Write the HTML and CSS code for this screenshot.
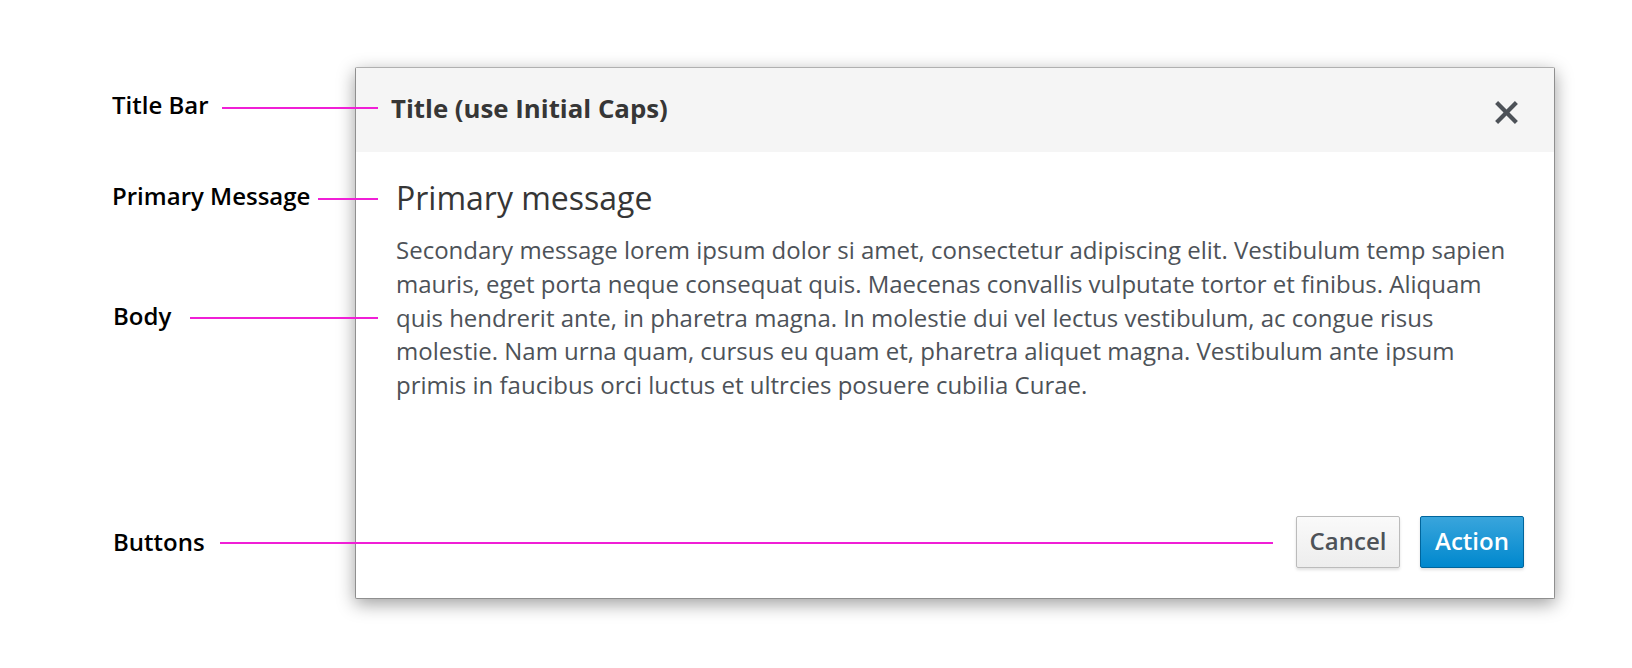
FILE: index.html
```html
<!DOCTYPE html>
<html lang="en">
<head>
<meta charset="utf-8">
<title>Modal Dialog Anatomy</title>
<link rel="stylesheet" href="styles.css">
</head>
<body>
<div class="canvas">
  <div class="modal">
    <div class="modal-header">
      <h4 class="modal-title">Title (use Initial Caps)</h4>
      <button class="close" aria-label="Close">
        <svg width="25" height="25" viewBox="0 0 25 25"><path d="M2.6 2.6 L22.4 22.4 M22.4 2.6 L2.6 22.4" stroke="#4d5258" stroke-width="4.2" stroke-linecap="butt" fill="none"/></svg>
      </button>
    </div>
    <div class="modal-body">
      <p class="primary">Primary message</p>
      <p class="secondary">Secondary message lorem ipsum dolor si amet, consectetur adipiscing elit. Vestibulum temp sapien mauris, eget porta neque consequat quis. Maecenas convallis vulputate tortor et finibus. Aliquam quis hendrerit ante, in pharetra magna. In molestie dui vel lectus vestibulum, ac congue risus molestie. Nam urna quam, cursus eu quam et, pharetra aliquet magna. Vestibulum ante ipsum primis in faucibus orci luctus et ultrcies posuere cubilia Curae.</p>
    </div>
    <div class="modal-footer">
      <button class="btn btn-default">Cancel</button>
      <button class="btn btn-primary">Action</button>
    </div>
  </div>

  <div class="label label-title">Title Bar</div>
  <div class="line line-title"></div>
  <div class="label label-primary">Primary Message</div>
  <div class="line line-primary"></div>
  <div class="label label-body">Body</div>
  <div class="line line-body"></div>
  <div class="label label-buttons">Buttons</div>
  <div class="line line-buttons"></div>
</div>
</body>
</html>
```

FILE: styles.css
```css
* { box-sizing: border-box; }
html, body { margin: 0; padding: 0; background: #fff; }
body { font-family: "Open Sans", "Liberation Sans", sans-serif; }

.canvas {
  position: relative;
  width: 1632px;
  height: 668px;
  padding-top: 67px;
  padding-left: 355px;
}

.modal {
  width: 1200px;
  height: 532px;
  display: flex;
  flex-direction: column;
  background: #fff;
  border: 1px solid #8f8f8f;
  border-top-color: #b0b0b0;
  border-radius: 2px;
  box-shadow: 0 5px 18px rgba(0,0,0,0.38);
}

.modal-header {
  height: 84px;
  flex: none;
  display: flex;
  align-items: center;
  justify-content: space-between;
  background: #f5f5f5;
  padding: 0 35px 4px 35px;
}
.modal-title {
  margin: 0;
  font-size: 25.8px;
  font-weight: 700;
  color: #363636;
}
.close {
  border: 0;
  background: none;
  padding: 0;
  margin-top: 9px;
  width: 25px;
  height: 25px;
  display: block;
}
.close svg { display: block; }

.modal-body {
  flex: 1;
  padding: 24px 40px 0 40px;
}
.primary {
  margin: 0 0 14px 0;
  font-size: 32px;
  font-weight: 400;
  color: #363636;
}
.secondary {
  margin: 0;
  font-size: 24px;
  line-height: 33.8px;
  color: #4d5258;
}

.modal-footer {
  flex: none;
  display: flex;
  justify-content: flex-end;
  gap: 20px;
  padding: 0 30px 30px 0;
}
.btn {
  width: 104px;
  height: 52px;
  border-radius: 2px;
  font-family: "Open Sans", "Liberation Sans", sans-serif;
  font-size: 24px;
  font-weight: 600;
  padding: 0 0 3px 0;
  box-shadow: 0 2px 3px rgba(0,0,0,0.12);
}
.btn-default {
  background: linear-gradient(#fafafa, #ededed);
  border: 1px solid #bbb;
  color: #4d5258;
}
.btn-primary {
  background: linear-gradient(#39a5dc, #0088ce);
  border: 1px solid #00659c;
  color: #fff;
}

.label {
  position: absolute;
  font-size: 24px;
  font-weight: 600;
  color: #000;
  line-height: 30px;
  white-space: nowrap;
}
.label-title { left: 112px; top: 90px; }
.label-primary { left: 112px; top: 181px; }
.label-body { left: 113px; top: 301px; }
.label-buttons { left: 113px; top: 527px; }

.line {
  position: absolute;
  height: 2px;
  background: #f01fd6;
}
.line-title { left: 222px; width: 156px; top: 107px; }
.line-primary { left: 318px; width: 60px; top: 198px; }
.line-body { left: 190px; width: 188px; top: 317px; }
.line-buttons { left: 220px; width: 1053px; top: 542px; }
```
